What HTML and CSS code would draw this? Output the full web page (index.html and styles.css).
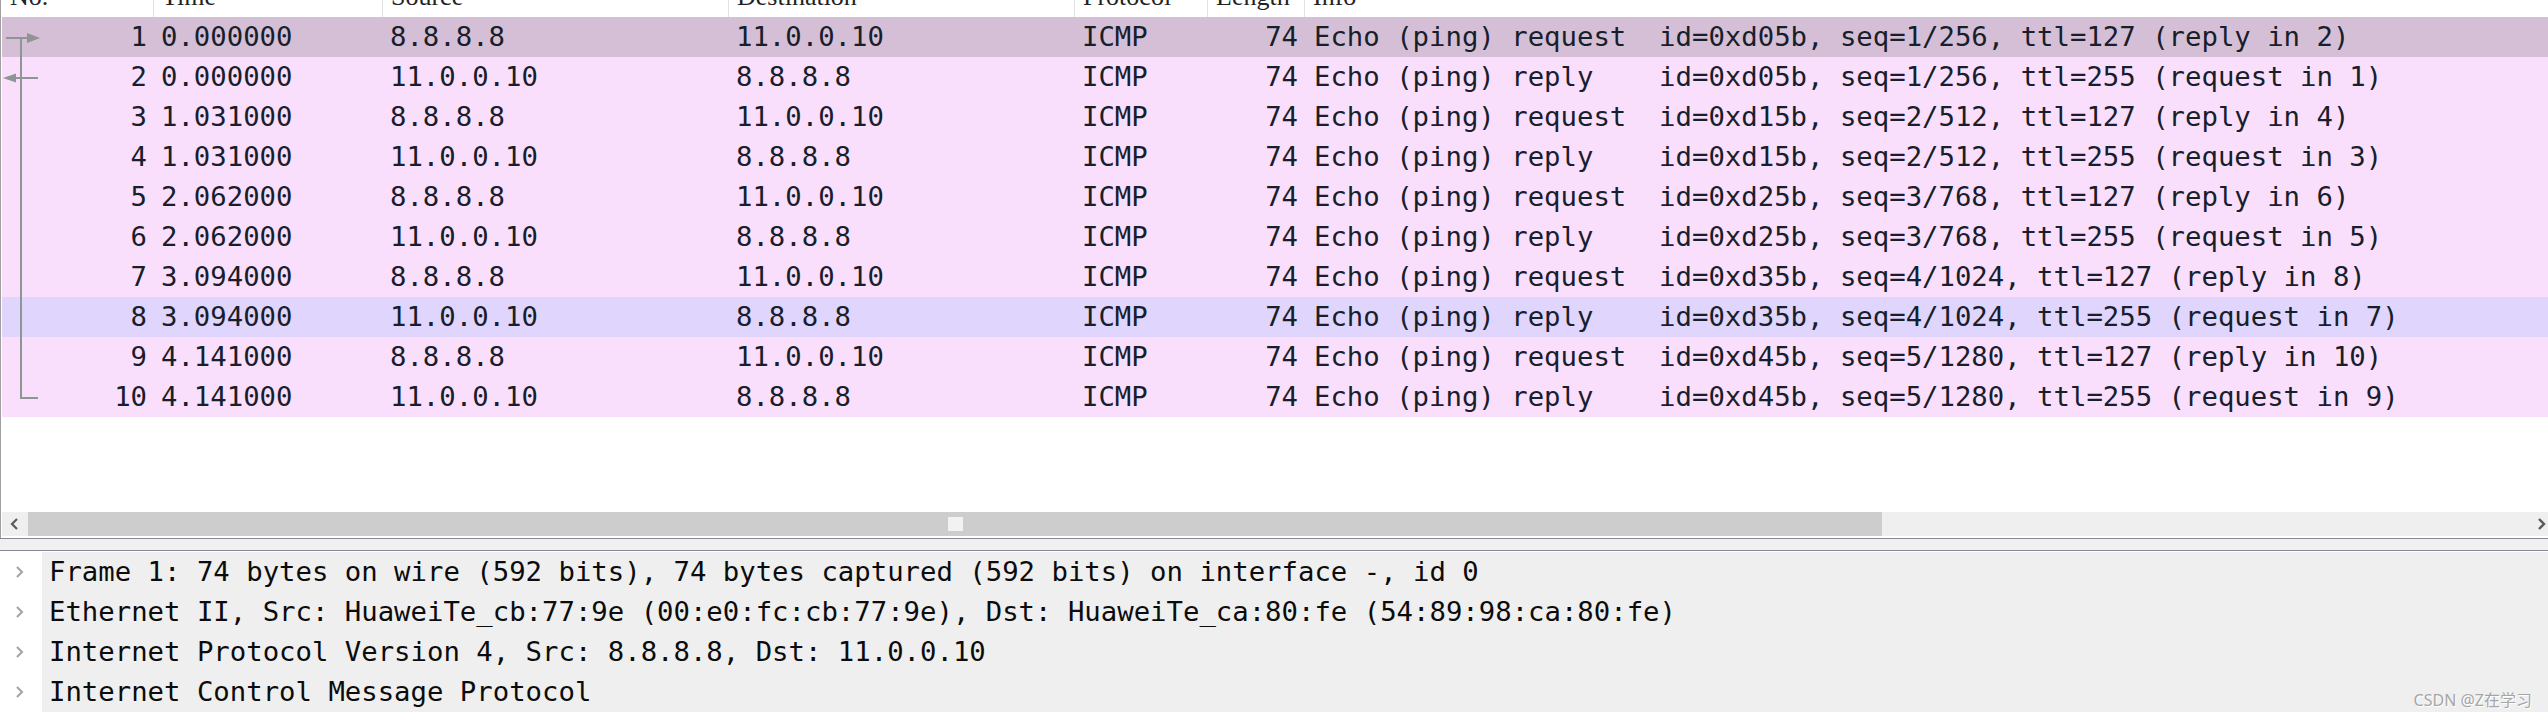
FILE: index.html
```html
<!DOCTYPE html>
<html>
<head>
<meta charset="utf-8">
<link rel="stylesheet" href="styles.css">
</head>
<body>
<div class="app">
  <div class="list-pane">
    <div class="list-header">
      <div class="hcell"><span>No.</span></div>
      <div class="hcell"><span>Time</span></div>
      <div class="hcell"><span>Source</span></div>
      <div class="hcell"><span>Destination</span></div>
      <div class="hcell"><span>Protocol</span></div>
      <div class="hcell"><span>Length</span></div>
      <div class="hcell last"><span>Info</span></div>
    </div>
    <div class="rows">
      <div class="row selected"><div class="c num">1</div><div class="c">0.000000</div><div class="c">8.8.8.8</div><div class="c">11.0.0.10</div><div class="c">ICMP</div><div class="c num">74</div><div class="c info">Echo (ping) request  id=0xd05b, seq=1/256, ttl=127 (reply in 2)</div></div>
      <div class="row"><div class="c num">2</div><div class="c">0.000000</div><div class="c">11.0.0.10</div><div class="c">8.8.8.8</div><div class="c">ICMP</div><div class="c num">74</div><div class="c info">Echo (ping) reply    id=0xd05b, seq=1/256, ttl=255 (request in 1)</div></div>
      <div class="row"><div class="c num">3</div><div class="c">1.031000</div><div class="c">8.8.8.8</div><div class="c">11.0.0.10</div><div class="c">ICMP</div><div class="c num">74</div><div class="c info">Echo (ping) request  id=0xd15b, seq=2/512, ttl=127 (reply in 4)</div></div>
      <div class="row"><div class="c num">4</div><div class="c">1.031000</div><div class="c">11.0.0.10</div><div class="c">8.8.8.8</div><div class="c">ICMP</div><div class="c num">74</div><div class="c info">Echo (ping) reply    id=0xd15b, seq=2/512, ttl=255 (request in 3)</div></div>
      <div class="row"><div class="c num">5</div><div class="c">2.062000</div><div class="c">8.8.8.8</div><div class="c">11.0.0.10</div><div class="c">ICMP</div><div class="c num">74</div><div class="c info">Echo (ping) request  id=0xd25b, seq=3/768, ttl=127 (reply in 6)</div></div>
      <div class="row"><div class="c num">6</div><div class="c">2.062000</div><div class="c">11.0.0.10</div><div class="c">8.8.8.8</div><div class="c">ICMP</div><div class="c num">74</div><div class="c info">Echo (ping) reply    id=0xd25b, seq=3/768, ttl=255 (request in 5)</div></div>
      <div class="row"><div class="c num">7</div><div class="c">3.094000</div><div class="c">8.8.8.8</div><div class="c">11.0.0.10</div><div class="c">ICMP</div><div class="c num">74</div><div class="c info">Echo (ping) request  id=0xd35b, seq=4/1024, ttl=127 (reply in 8)</div></div>
      <div class="row hover"><div class="c num">8</div><div class="c">3.094000</div><div class="c">11.0.0.10</div><div class="c">8.8.8.8</div><div class="c">ICMP</div><div class="c num">74</div><div class="c info">Echo (ping) reply    id=0xd35b, seq=4/1024, ttl=255 (request in 7)</div></div>
      <div class="row"><div class="c num">9</div><div class="c">4.141000</div><div class="c">8.8.8.8</div><div class="c">11.0.0.10</div><div class="c">ICMP</div><div class="c num">74</div><div class="c info">Echo (ping) request  id=0xd45b, seq=5/1280, ttl=127 (reply in 10)</div></div>
      <div class="row"><div class="c num">10</div><div class="c">4.141000</div><div class="c">11.0.0.10</div><div class="c">8.8.8.8</div><div class="c">ICMP</div><div class="c num">74</div><div class="c info">Echo (ping) reply    id=0xd45b, seq=5/1280, ttl=255 (request in 9)</div></div>
      <svg class="related" width="44" height="400" viewBox="0 0 44 400">
        <g stroke="#8f9494" stroke-width="2" fill="none">
          <path d="M4 21 H28"/>
          <path d="M19 21 V381 H36"/>
          <path d="M13 61 H36"/>
        </g>
        <g fill="#8f9494">
          <polygon points="25,16 38,21 25,26"/>
          <polygon points="1,61 14,56.5 14,65.5"/>
        </g>
      </svg>
    </div>
    <div class="list-empty"></div>
    <div class="hscroll">
      <div class="sbtn left"><svg width="26" height="24" viewBox="0 0 26 24"><polyline points="15,7 10,12 15,17" fill="none" stroke="#5a5a5a" stroke-width="2.2"/></svg></div>
      <div class="thumb"><div class="grip"></div></div>
      <div class="track"></div>
      <div class="sbtn right"><svg width="12" height="24" viewBox="0 0 12 24"><polyline points="3,7 8,12 3,17" fill="none" stroke="#5a5a5a" stroke-width="2.4"/></svg></div>
    </div>
  </div>
  <div class="splitter"></div>
  <div class="detail-pane">
    <div class="drow"><div class="expander"><svg width="12" height="14" viewBox="0 0 12 14"><polyline points="3,2 8,7 3,12" fill="none" stroke="#a3a3a3" stroke-width="2"/></svg></div><div class="dtext">Frame 1: 74 bytes on wire (592 bits), 74 bytes captured (592 bits) on interface -, id 0</div></div>
    <div class="drow"><div class="expander"><svg width="12" height="14" viewBox="0 0 12 14"><polyline points="3,2 8,7 3,12" fill="none" stroke="#a3a3a3" stroke-width="2"/></svg></div><div class="dtext">Ethernet II, Src: HuaweiTe_cb:77:9e (00:e0:fc:cb:77:9e), Dst: HuaweiTe_ca:80:fe (54:89:98:ca:80:fe)</div></div>
    <div class="drow"><div class="expander"><svg width="12" height="14" viewBox="0 0 12 14"><polyline points="3,2 8,7 3,12" fill="none" stroke="#a3a3a3" stroke-width="2"/></svg></div><div class="dtext">Internet Protocol Version 4, Src: 8.8.8.8, Dst: 11.0.0.10</div></div>
    <div class="drow"><div class="expander"><svg width="12" height="14" viewBox="0 0 12 14"><polyline points="3,2 8,7 3,12" fill="none" stroke="#a3a3a3" stroke-width="2"/></svg></div><div class="dtext">Internet Control Message Protocol</div></div>
  </div>
  <div class="watermark">CSDN @Z在学习</div>
</div>
</body>
</html>
```

FILE: styles.css
```css
* { box-sizing: border-box; }
html, body { margin: 0; padding: 0; background: #ffffff; }
body { width: 2548px; height: 718px; overflow: hidden; }

.app {
  position: relative;
  width: 2548px;
  height: 718px;
  font-family: "DejaVu Sans Mono", "Liberation Mono", monospace;
  font-size: 27.3px;
  color: #17202a;
}

.list-pane {
  display: flex;
  flex-direction: column;
  height: 538px;
  border-left: 1px solid #a0a0a0;
  padding-left: 1px;
  padding-bottom: 2px;
}

.list-header {
  display: grid;
  grid-template-columns: 152px 229px 346px 346px 133px 97px 1fr;
  height: 17px;
  background: #ffffff;
}
.hcell {
  height: 17px;
  overflow: hidden;
  border-right: 1px solid #e3e3e3;
  padding-left: 8px;
  font-family: "Liberation Serif", serif;
  font-size: 26px;
  color: #222;
}
.hcell.last { border-right: none; }
.hcell span {
  display: block;
  line-height: 26px;
  margin-top: -16px;
  white-space: nowrap;
}

.rows { position: relative; }
.row {
  display: grid;
  grid-template-columns: 152px 229px 346px 346px 133px 97px 1fr;
  height: 40px;
  line-height: 40px;
  background: #fadffd;
}
.row.selected { background: #d5bfd6; }
.row.hover { background: #e0d5fd; }
.c {
  padding: 0 7px;
  white-space: pre;
  overflow: hidden;
}
.c.num { text-align: right; }
.c.info { padding-left: 9px; }

.related {
  position: absolute;
  left: 0;
  top: 0;
}

.list-empty { flex: 1; background: #ffffff; }

.hscroll {
  display: flex;
  height: 24px;
  background: #efefef;
}
.sbtn { display: flex; align-items: center; background: #efefef; }
.sbtn.left { width: 26px; }
.sbtn.right { width: 12px; }
.thumb {
  width: 1854px;
  background: #cdcdcd;
  display: flex;
  align-items: center;
  justify-content: center;
}
.grip {
  width: 15px;
  height: 14px;
  background: #f2f2f2;
}
.track { flex: 1; }

.splitter {
  height: 13px;
  border-top: 1px solid #8a8a96;
  border-bottom: 1px solid #8a8a96;
  background: #f0f0f0;
  margin-bottom: 1px;
}

.detail-pane { display: flex; flex-direction: column; }
.drow {
  display: flex;
  height: 40px;
  line-height: 40px;
}
.expander {
  width: 42px;
  background: #ffffff;
  display: flex;
  align-items: center;
  padding-left: 14px;
}
.expander svg { display: block; }
.dtext {
  flex: 1;
  background: #efefef;
  padding-left: 7px;
  white-space: pre;
  color: #0c0c0c;
}

.watermark {
  position: absolute;
  right: 16px;
  bottom: 8px;
  font-family: "Noto Sans", "Noto Sans CJK SC", sans-serif;
  font-size: 16px;
  line-height: 20px;
  color: #a6a6a6;
  text-shadow: 1px 1px 0 #ffffff;
}
```
